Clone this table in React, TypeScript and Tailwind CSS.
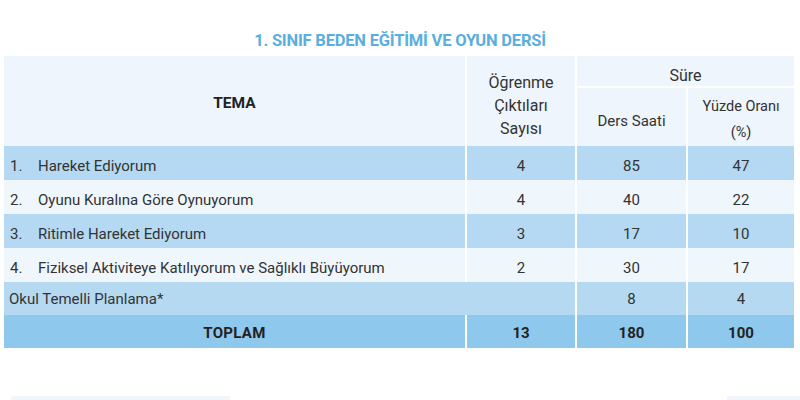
import React from "react";

const rows = [
  { n: "1.", t: "Hareket Ediyorum", a: "4", b: "85", c: "47", dark: true },
  { n: "2.", t: "Oyunu Kuralına Göre Oynuyorum", a: "4", b: "40", c: "22", dark: false },
  { n: "3.", t: "Ritimle Hareket Ediyorum", a: "3", b: "17", c: "10", dark: true },
  { n: "4.", t: "Fiziksel Aktiviteye Katılıyorum ve Sağlıklı Büyüyorum", a: "2", b: "30", c: "17", dark: false },
];

export default function App() {
  return (
    <div className="w-[800px] h-[400px] bg-white overflow-hidden relative text-[#2f3640]" style={{ fontFamily: "Roboto, 'Noto Sans', sans-serif" }}>
      <div className="pt-[30px] h-[56px] text-center text-[16.5px] font-bold text-[#5aaee0] leading-[22px] tracking-[-0.2px]">
        1. SINIF BEDEN EĞİTİMİ VE OYUN DERSİ
      </div>
      <div className="ml-[4px] w-[790px] flex flex-col">
        {/* header */}
        <div className="flex gap-[2px] h-[90px]">
          <div className="w-[461px] bg-[#eef5fc] flex items-center justify-center font-bold text-[15.5px] text-[#222] pt-[5px]">TEMA</div>
          <div className="w-[108px] bg-[#eef5fc] flex items-center justify-center text-center text-[16px] leading-[23px] text-[#333] pt-[9px]">
            Öğrenme<br />Çıktıları<br />Sayısı
          </div>
          <div className="w-[217px] flex flex-col gap-[2px]">
            <div className="h-[30px] bg-[#eef5fc] flex items-center justify-center text-[16px] text-[#333] pt-[10px]">Süre</div>
            <div className="flex-1 flex gap-[2px]">
              <div className="w-[109px] bg-[#eef5fc] flex items-center justify-center text-[15px] text-[#333] pt-[8px]">Ders Saati</div>
              <div className="w-[106px] bg-[#eef5fc] flex items-center justify-center text-center text-[14.5px] leading-[26px] text-[#333] pt-[6px]">
                Yüzde Oranı<br />(%)
              </div>
            </div>
          </div>
        </div>
        {rows.map((r) => {
          const bg = r.dark ? "bg-[#b5d9f2]" : "bg-[#eff6fc]";
          return (
            <div key={r.n} className="flex gap-[2px] h-[34px] text-[15px] text-[#333]">
              <div className={`w-[461px] ${bg} flex items-center pl-[6px] pt-[6px]`}>
                <span className="w-[28px]">{r.n}</span>
                <span>{r.t}</span>
              </div>
              <div className={`w-[108px] ${bg} flex items-center justify-center pt-[6px]`}>{r.a}</div>
              <div className={`w-[109px] ${bg} flex items-center justify-center pt-[6px]`}>{r.b}</div>
              <div className={`w-[106px] ${bg} flex items-center justify-center pt-[6px]`}>{r.c}</div>
            </div>
          );
        })}
        <div className="flex gap-[2px] h-[33px] text-[15px] text-[#333]">
          <div className="w-[571px] bg-[#b6d9f2] flex items-center pl-[5px] pt-[2px]">Okul Temelli Planlama*</div>
          <div className="w-[109px] bg-[#b6d9f2] flex items-center justify-center pt-[2px]">8</div>
          <div className="w-[106px] bg-[#b6d9f2] flex items-center justify-center pt-[2px]">4</div>
        </div>
        <div className="flex gap-[2px] h-[33px] text-[15px] font-bold text-[#222]">
          <div className="w-[461px] bg-[#8ec8ec] flex items-center justify-center tracking-[0.3px] pt-[3px]">TOPLAM</div>
          <div className="w-[108px] bg-[#8ec8ec] flex items-center justify-center pt-[3px]">13</div>
          <div className="w-[109px] bg-[#8ec8ec] flex items-center justify-center pt-[3px]">180</div>
          <div className="w-[106px] bg-[#8ec8ec] flex items-center justify-center pt-[3px]">100</div>
        </div>
      </div>
      <div className="absolute left-[11px] top-[396px] w-[219px] h-[10px] bg-[#f1f6fc]" />
      <div className="absolute left-[727px] top-[396px] w-[73px] h-[10px] bg-[#f1f6fc]" />
    </div>
  );
}
